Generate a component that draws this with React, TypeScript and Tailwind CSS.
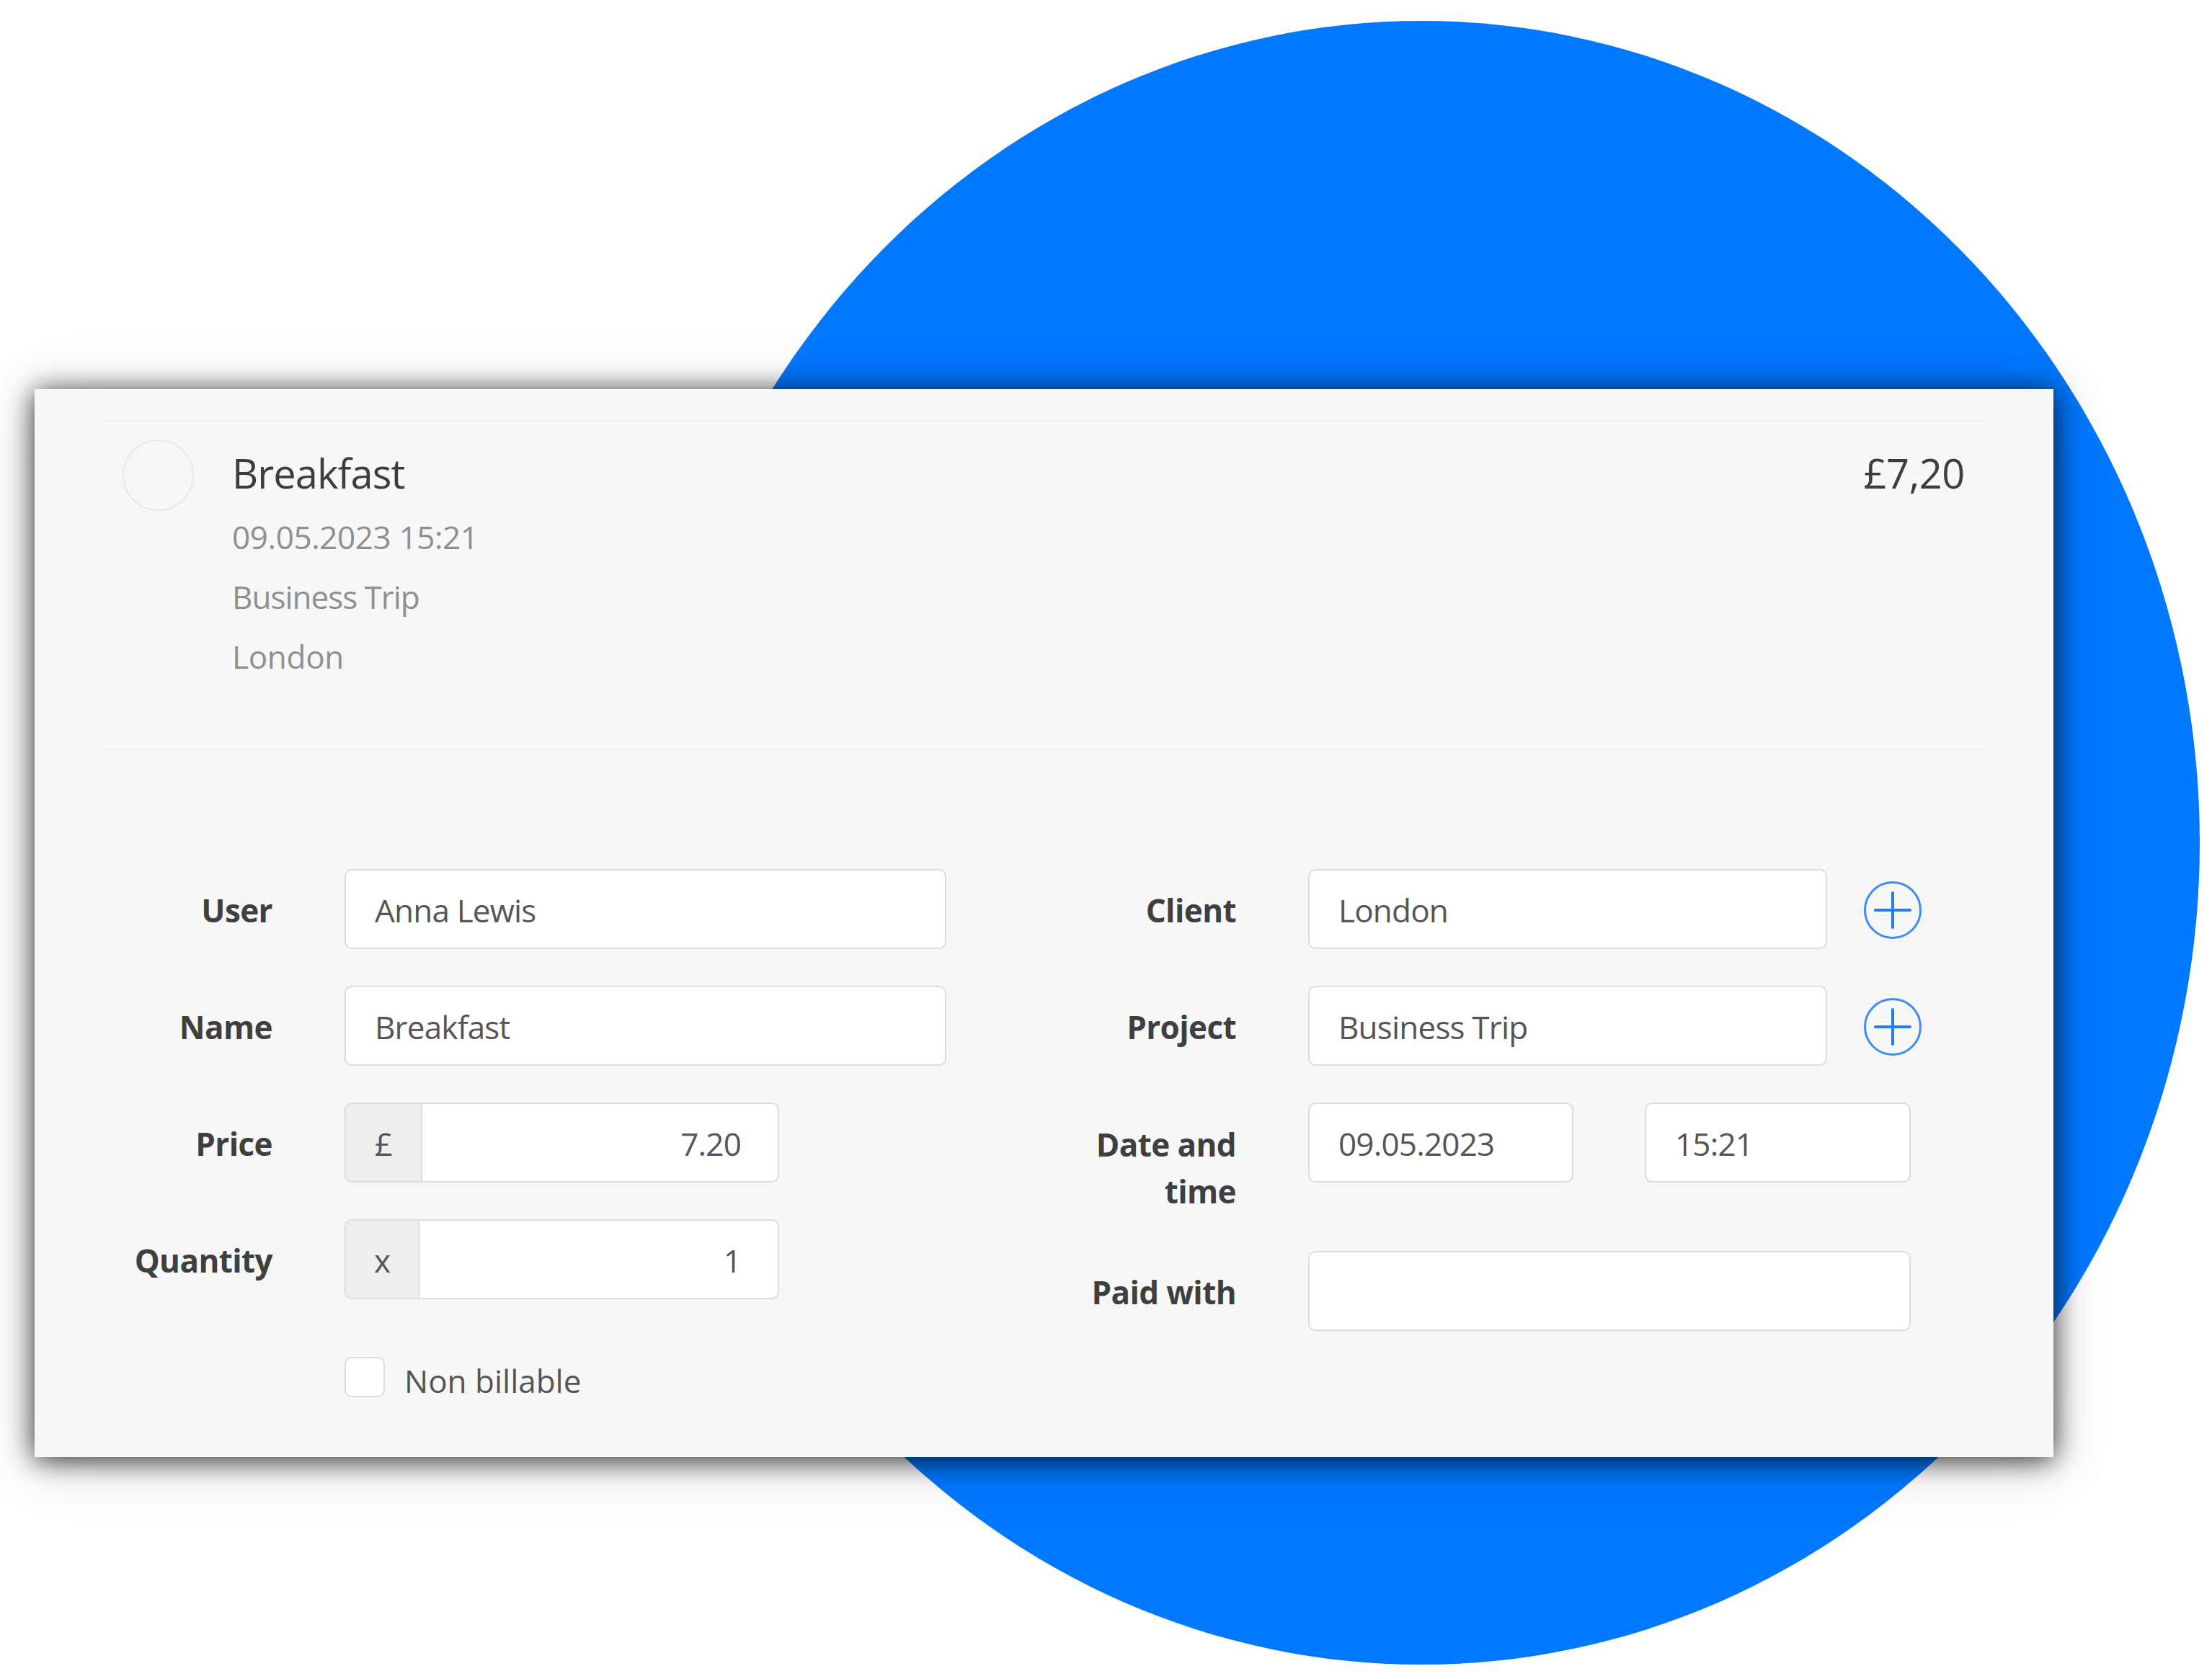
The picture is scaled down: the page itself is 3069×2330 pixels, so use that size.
const font = "font-['Open_Sans','Noto_Sans',sans-serif]";

function Plus() {
  return (
    <svg width="80" height="80" viewBox="0 0 80 80" fill="none" className="shrink-0 mt-[2px]">
      <circle cx="40" cy="40" r="38.5" stroke="#3b8df5" strokeWidth="3" />
      <path d="M40 16V64M16 40H64" stroke="#1f7cf2" strokeWidth="4" strokeLinecap="round" />
    </svg>
  );
}

function Field({ value, className = "" }: { value?: string; className?: string }) {
  return (
    <div className={`h-[111px] bg-white border-2 border-[#dcdcdc] rounded-[10px] flex items-center pl-[40px] pt-[2px] text-[44px] text-[#555555] tracking-[-0.8px] ${className}`}>
      {value}
    </div>
  );
}

function Addon({ sign, value, w }: { sign: string; value: string; w: string }) {
  return (
    <div className="w-[603px] h-[111px] flex bg-white border-2 border-[#dcdcdc] rounded-[10px] overflow-hidden text-[44px] text-[#555555] tracking-[-0.8px]">
      <div className={`${w} shrink-0 bg-[#eeeeee] border-r-2 border-[#dcdcdc] flex items-center justify-center pt-[2px]`}>{sign}</div>
      <div className="flex-1 flex items-center justify-end pr-[51px] pt-[2px]">{value}</div>
    </div>
  );
}

function Label({ children, className = "w-[235px]" }: { children: React.ReactNode; className?: string }) {
  return (
    <div className={`${className} shrink-0 text-right font-bold text-[44px] leading-[65px] text-[#3f3f3f] tracking-[-0.6px]`}>
      {children}
    </div>
  );
}

function Row({ label, children, labelClass }: { label: React.ReactNode; children: React.ReactNode; labelClass?: string }) {
  return (
    <div className="flex items-center h-[111px] gap-[100px] [&>*:first-child]:pt-[3px]">
      <Label className={labelClass}>{label}</Label>
      {children}
    </div>
  );
}

export default function App() {
  return (
    <div className={`relative w-[3069px] h-[2330px] bg-white overflow-hidden pt-[540px] pl-[48px] ${font}`}>
      <div className="absolute left-[892px] top-[29px] w-[2160px] h-[2281px] rounded-[50%] bg-[#0078ff]" />
      <div className="relative w-[2801px] h-[1482px] bg-[#f7f7f7] shadow-[0_4px_36px_rgba(0,0,0,0.8),0_8px_80px_rgba(0,0,0,0.15)] pl-[95px] pr-[98px] pt-[43px]">
        <div className="h-[458px] border-y-2 border-[#efefef] flex pt-[25px] pl-[27px] pr-[25px]">
          <div className="w-[99px] h-[99px] rounded-full border-2 border-[#e8e8e8] shrink-0" />
          <div className="ml-[53px] flex-1 pt-[2px]">
            <div className="text-[56px] leading-[89px] h-[92px] text-[#3d3d3d] tracking-[-0.9px]">Breakfast</div>
            <div className="text-[44px] leading-[83px] text-[#8f8f8f] tracking-[-0.8px]">
              <div className="tracking-[-0.4px]">09.05.2023 15:21</div>
              <div className="tracking-[-1px]">Business Trip</div>
              <div className="tracking-[-0.3px]">London</div>
            </div>
          </div>
          <div className="text-[56px] leading-[89px] pt-[2px] text-[#3d3d3d] tracking-[-0.4px]">£7,20</div>
        </div>
        <div className="flex pt-[165px]">
          <div className="w-[1240px] shrink-0 flex flex-col gap-[51px]">
            <Row label="User"><Field value="Anna Lewis" className="w-[835px] tracking-[-0.4px]" /></Row>
            <Row label="Name"><Field value="Breakfast" className="w-[835px]" /></Row>
            <Row label="Price"><Addon sign="£" value="7.20" w="w-[106px]" /></Row>
            <Row label="Quantity"><Addon sign="x" value="1" w="w-[102px]" /></Row>
            <div className="flex items-start mt-[29px] ml-[335px]">
              <div className="w-[56px] h-[56px] bg-white border-2 border-[#dcdcdc] rounded-[10px]" />
              <span className="ml-[27px] text-[44px] leading-[56px] mt-[5px] text-[#555555]">Non billable</span>
            </div>
          </div>
          <div className="flex flex-col gap-[51px]">
            <Row label="Client" labelClass="w-[332px]">
              <div className="flex items-center gap-[51px]"><Field value="London" className="w-[720px]" /><Plus /></div>
            </Row>
            <Row label="Project" labelClass="w-[332px]">
              <div className="flex items-center gap-[51px]"><Field value="Business Trip" className="w-[720px]" /><Plus /></div>
            </Row>
            <div className="flex h-[155px] gap-[100px]">
              <div className="pt-[26px]"><Label className="w-[332px]">Date and<br />time</Label></div>
              <div className="flex gap-[99px]">
                <Field value="09.05.2023" className="w-[368px]" />
                <Field value="15:21" className="w-[369px]" />
              </div>
            </div>
            <Row label="Paid with" labelClass="w-[332px]"><Field className="w-[836px]" /></Row>
          </div>
        </div>
      </div>
    </div>
  );
}
